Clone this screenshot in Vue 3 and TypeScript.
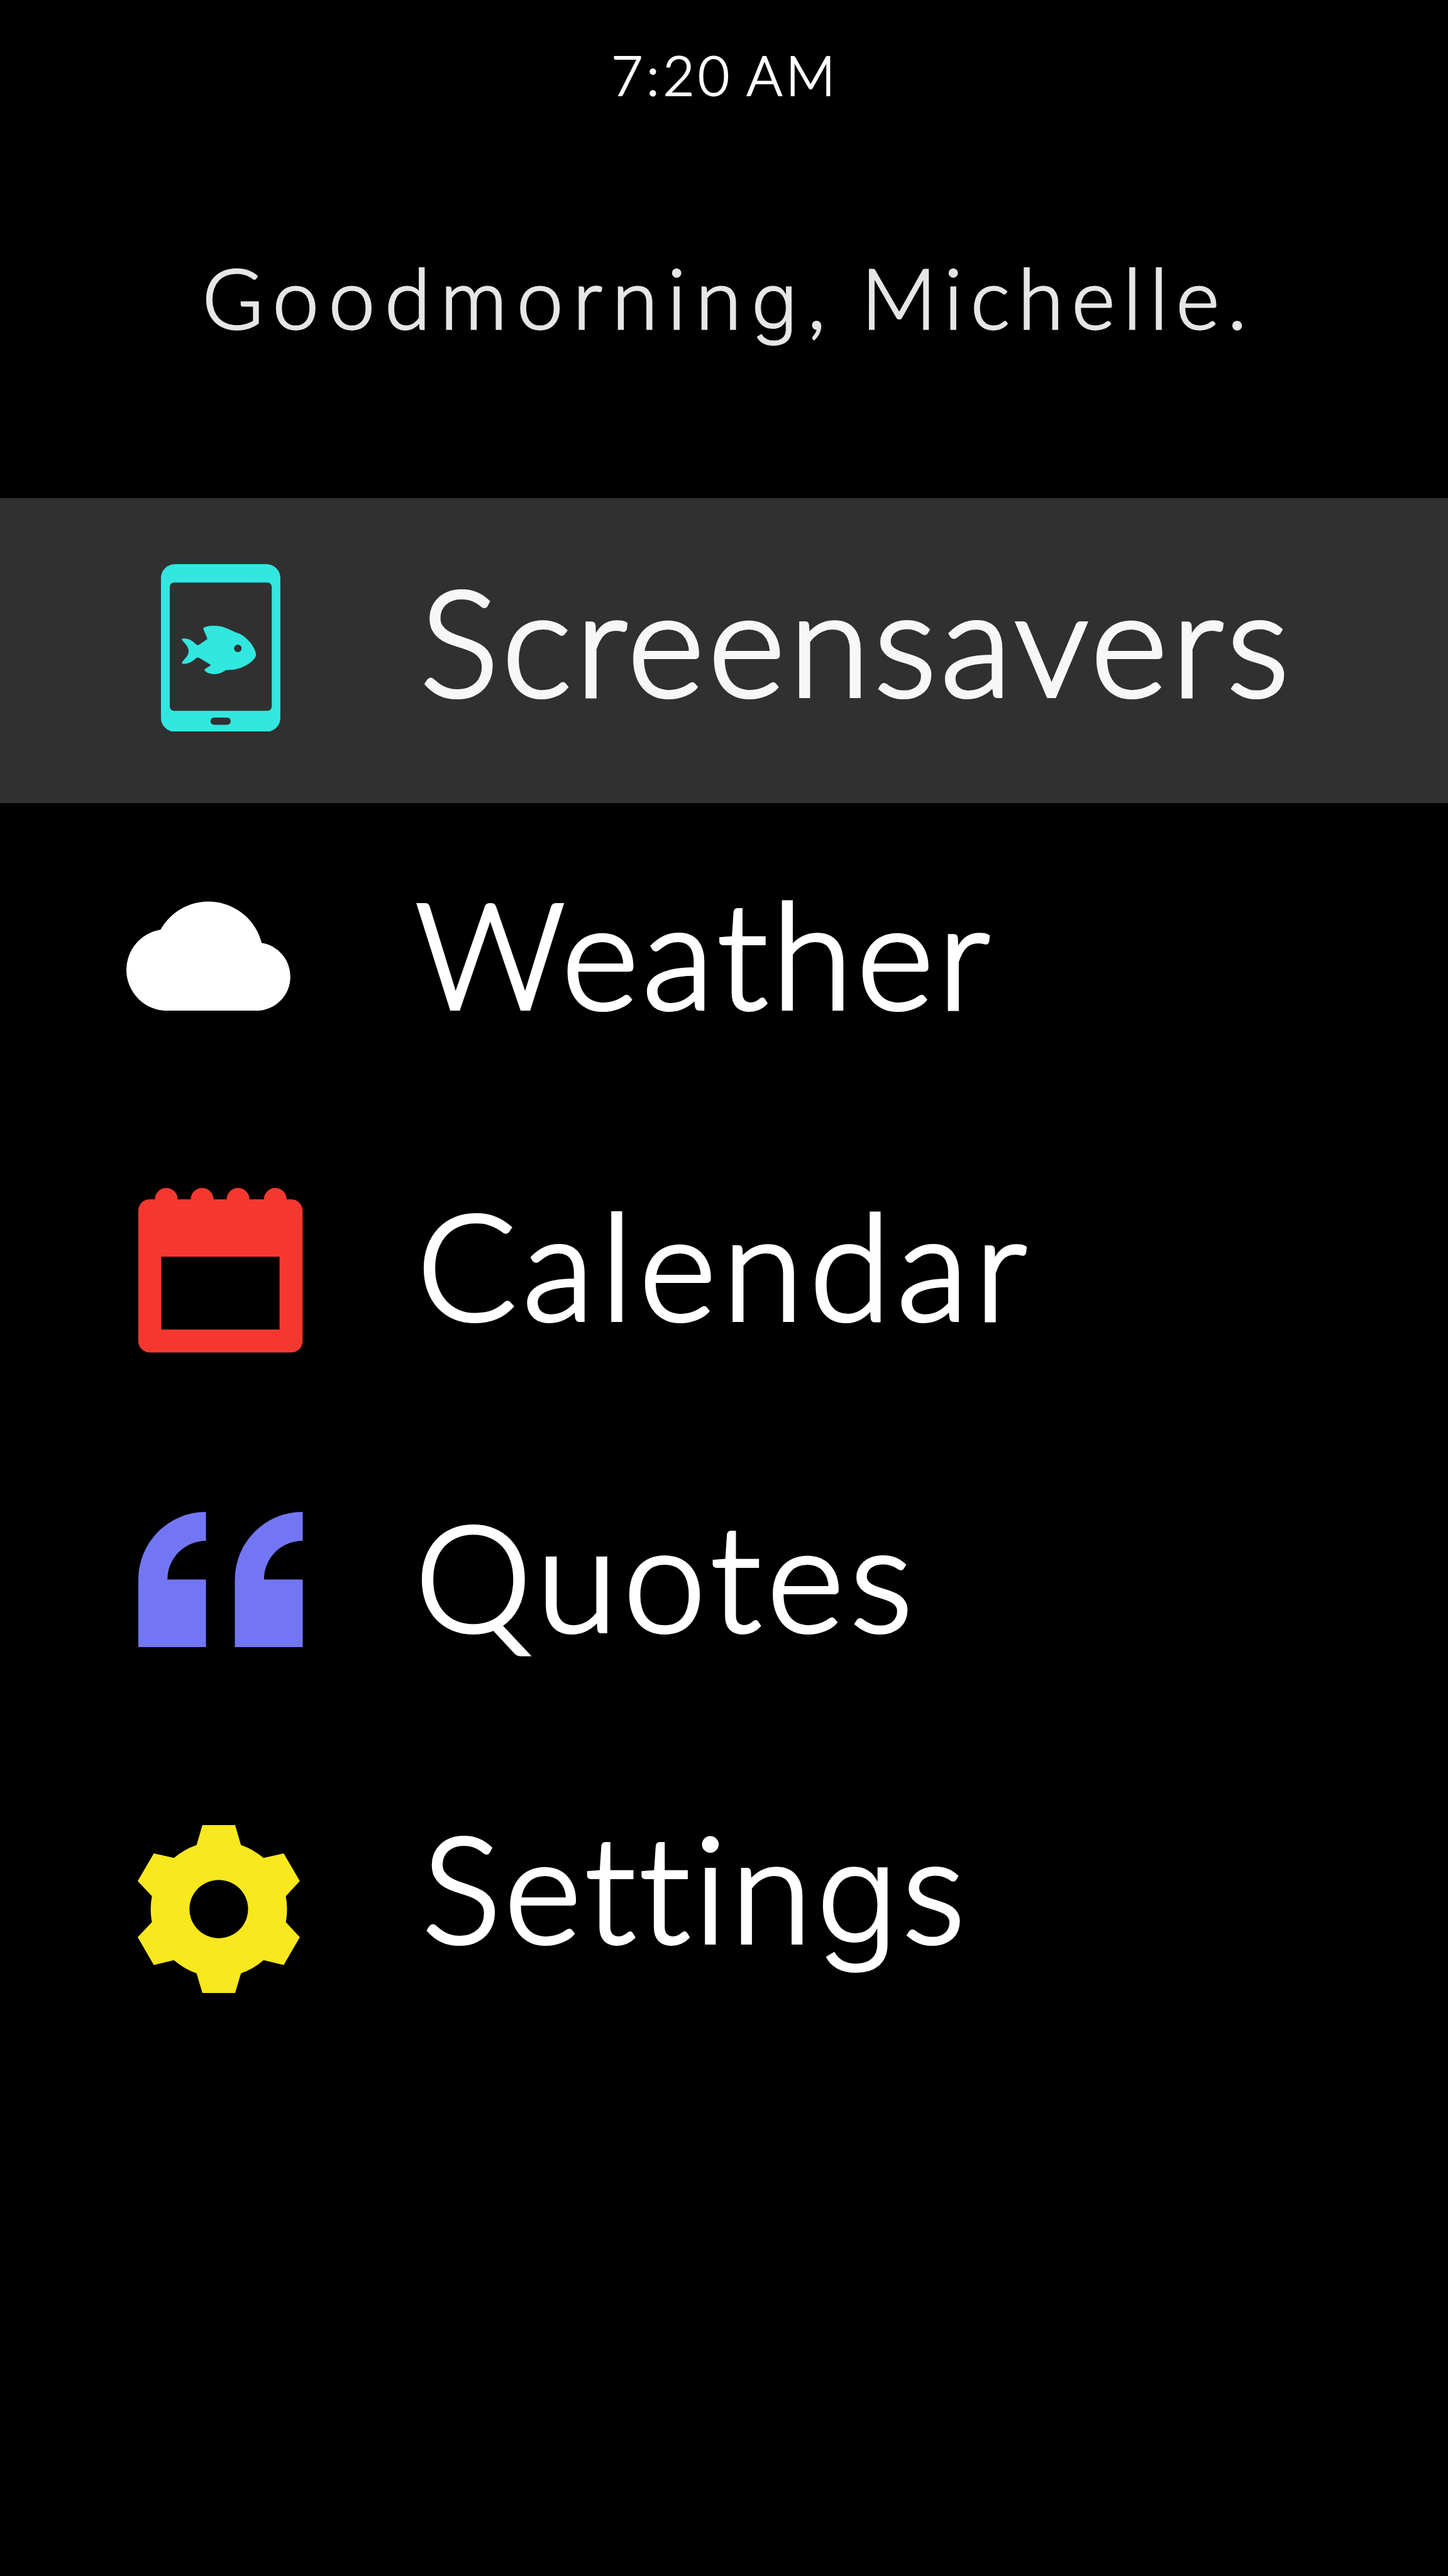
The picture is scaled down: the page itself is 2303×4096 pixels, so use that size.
<script setup lang="ts">
type IconName = 'tablet' | 'cloud' | 'calendar' | 'quotes' | 'gear'

interface MenuItem {
  label: string
  icon: IconName
  active?: boolean
}

const time = '7:20 AM'
const greeting = ['Goodmorning,', 'Michelle.']

const items: MenuItem[] = [
  { label: 'Screensavers', icon: 'tablet', active: true },
  { label: 'Weather', icon: 'cloud' },
  { label: 'Calendar', icon: 'calendar' },
  { label: 'Quotes', icon: 'quotes' },
  { label: 'Settings', icon: 'gear' },
]

// Splits a word around its "g"s, which are set with a single-storey form.
const runs = (word: string): string[] => word.split(/(g)/).filter(Boolean)
</script>

<template>
  <main class="screen">
    <header class="head">
      <div class="time">{{ time }}</div>
      <h1 class="greeting">
        <span v-for="(word, i) in greeting" :key="word" :class="i === 0 ? 'hello' : 'name'"><span v-for="(run, k) in runs(word)" :key="k" :class="{ single: run === 'g' }">{{ run }}</span></span>
      </h1>
    </header>

    <nav class="menu">
      <a
        v-for="item in items"
        :key="item.label"
        class="row"
        :class="[item.icon, { active: item.active }]"
      >
        <span class="icon-cell">
          <svg v-if="item.icon === 'tablet'" class="icon" viewBox="48 51 570 800">
            <path
              fill-rule="evenodd"
              d="M114 51H552A66 66 0 0 1 618 117V785A66 66 0 0 1 552 851H114A66 66 0 0 1 48 785V117A66 66 0 0 1 114 51Z
                 M110 139A20 20 0 0 0 90 159V731A20 20 0 0 0 110 751H557A20 20 0 0 0 577 731V159A20 20 0 0 0 557 139Z
                 M302 783A17.5 17.5 0 0 0 302 818H364A17.5 17.5 0 0 0 364 783Z"
            />
            <path
              fill-rule="evenodd"
              d="M250 360C250 349 277 345 303 345C340 345 372 360 402 376C450 386 500 445 502 485C498 515 430 558 376 556L358 557C340 569 325 576 302 576C278 576 258 566 255 554L287 533L232 499Q223 494 216 499C200 515 180 527 158 527Q146 527 148 521C160 502 180 490 180 467C180 443 162 430 147 411Q146 406 158 406C185 405 203 422 217 435Q224 440 231 435L270 408Z
                 M397 453A18 18 0 1 0 433 453A18 18 0 1 0 397 453Z"
            />
          </svg>
          <svg v-else-if="item.icon === 'cloud'" class="icon" viewBox="33 71 783 523">
            <path d="M228 594A195 195 0 0 1 33 399A195 195 0 0 1 196 206.600A262.500 262.500 0 0 1 679 270A163 163 0 0 1 816 431A163 163 0 0 1 653 594Z" />
          </svg>
          <svg v-else-if="item.icon === 'calendar'" class="icon" viewBox="61 60 784 785">
            <path
              fill-rule="evenodd"
              d="M140 114A54.5 54.5 0 0 1 249 114H311A54.5 54.5 0 0 1 420 114H482.500A54.5 54.5 0 0 1 591.500 114H660A54.5 54.5 0 0 1 769 114H791A54 54 0 0 1 845 168V791A54 54 0 0 1 791 845H115A54 54 0 0 1 61 791V168A54 54 0 0 1 115 114Z
                 M171 388V735H735V388Z"
            />
          </svg>
          <svg v-else-if="item.icon === 'quotes'" class="icon" viewBox="61 74.500 785 646">
            <path d="M384 74.500V212.500A184 184 0 0 0 200 397H384V720.500H61V397.500A323 323 0 0 1 384 74.500Z" />
            <path d="M846 74.500V212.500A184 184 0 0 0 661 397H846V720.500H522V397.500A323 323 0 0 1 846 74.500Z" />
          </svg>
          <svg v-else class="icon" viewBox="57 71 774 802">
            <path
              fill-rule="evenodd"
              d="M366 71H522L550 166A326 326 0 0 1 658 228L754 206L831 338L764 410A326 326 0 0 1 764 534L831 606L754 739L658 716A326 326 0 0 1 550 779L522 873H366L338 779A326 326 0 0 1 230 716L134 739L57 606L125 534A326 326 0 0 1 125 410L57 338L134 206L230 228A326 326 0 0 1 338 166Z
                 M304 472A140 139 0 1 0 584 472A140 139 0 1 0 304 472Z"
            />
          </svg>
        </span>
        <span class="label"><span v-for="(run, k) in runs(item.label)" :key="k" :class="{ single: run === 'g' }">{{ run }}</span></span>
      </a>
    </nav>
  </main>
</template>

<style>
html,
body {
  background: #000;
}
</style>

<style scoped>
.screen {
  zoom: 0.9995;
  width: 2304px;
  height: 4098px;
  overflow: hidden;
  box-sizing: border-box;
  padding-top: 67px;
  background: #000;
  color: #fff;
  font-family: Lato, 'Open Sans', sans-serif;
  font-weight: 300;
}

.head {
  height: 725px;
}

.time {
  height: 104px;
  padding-left: 972.8px;
  font-size: 86.5px;
  line-height: 104px;
  letter-spacing: 5.6px;
  word-spacing: -4.5px;
  white-space: nowrap;
  -webkit-text-stroke: 2.2px currentColor;
}

.greeting {
  display: flex;
  gap: 41px;
  margin: 223px 0 0;
  padding-left: 322px;
  color: #e6e6e6;
  font-size: 132px;
  font-weight: 300;
  line-height: 158px;
  white-space: nowrap;
  -webkit-text-stroke: 3px currentColor;
}

.hello {
  letter-spacing: 15.6px;
}

.name {
  letter-spacing: 13px;
}

.single {
  font-family: Inter, 'Noto Sans', sans-serif;
  font-size: 0.93em;
  line-height: 0;
  -webkit-text-stroke-width: 0.008em;
}

.menu {
  display: flex;
  flex-direction: column;
}

.row {
  display: flex;
  align-items: flex-start;
  height: 495px;
}

.row.active {
  height: 486px;
  background: #303030;
  color: #f7f7f7;
}

.icon-cell {
  display: flex;
  flex: none;
  box-sizing: border-box;
  width: 660px;
}

.icon {
  display: block;
  fill: currentColor;
}

.label {
  padding-top: 97px;
  font-size: 234px;
  line-height: 281px;
  white-space: nowrap;
  -webkit-text-stroke: 6px currentColor;
}

.active .label {
  padding-top: 85px;
}

.tablet .icon-cell {
  padding: 105px 0 0 256px;
  color: #31e7df;
}
.tablet .icon {
  width: 190px;
  height: 266.7px;
}
.tablet .label {
  margin-left: 8.5px;
  letter-spacing: 6.5px;
}

.cloud .icon-cell {
  padding: 155.6px 0 0 201px;
}
.cloud .icon {
  width: 261px;
  height: 174.3px;
}
.cloud .label {
  margin-left: 1px;
  letter-spacing: 6.7px;
}

.calendar .icon-cell {
  padding: 117px 0 0 220.4px;
  color: #f43830;
}
.calendar .icon {
  width: 261.4px;
  height: 261.7px;
}
.calendar .label {
  margin-left: 3.6px;
  letter-spacing: 10.2px;
}

.quotes .icon-cell {
  padding: 136.8px 0 0 220.4px;
  color: #7376f3;
}
.quotes .icon {
  width: 261.6px;
  height: 215.3px;
}
.quotes .label {
  margin-left: 0.6px;
  letter-spacing: 10px;
}

.gear .icon-cell {
  padding: 140.8px 0 0 219px;
  color: #f9e81e;
}
.gear .icon {
  width: 258px;
  height: 267.3px;
}
.gear .label {
  margin-left: 12px;
  letter-spacing: 6.6px;
}
</style>
